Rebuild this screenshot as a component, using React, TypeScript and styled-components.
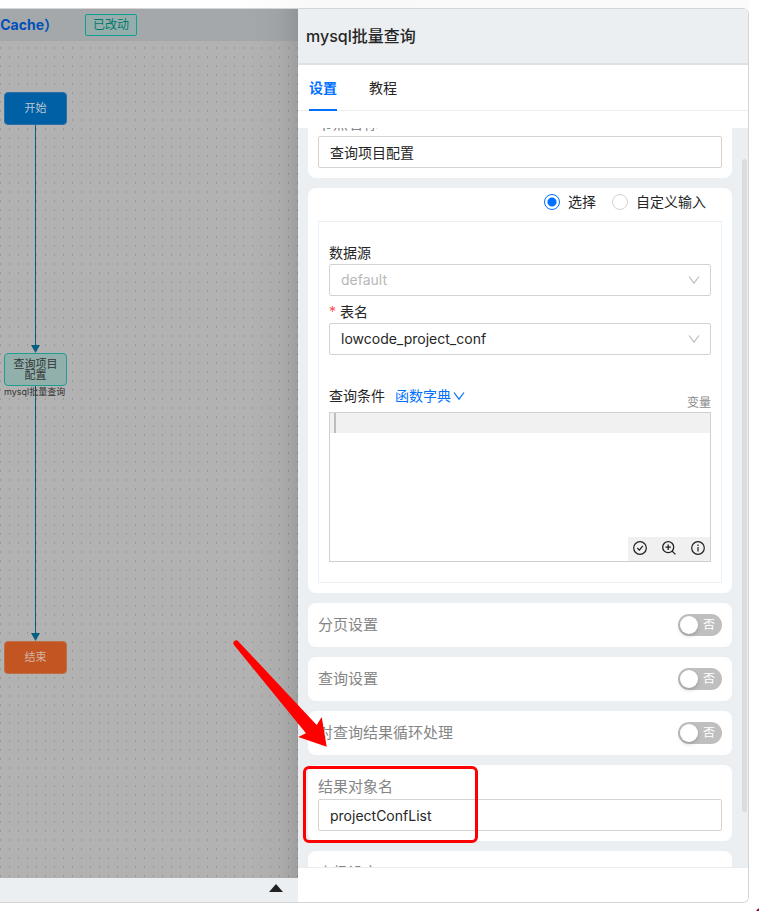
import React, { useLayoutEffect, useRef, useState } from "react";
import styled, { createGlobalStyle, css } from "styled-components";

const GlobalStyle = createGlobalStyle`
  *, *::before, *::after { box-sizing: border-box; }
  html, body, #root { height: 100%; }
  body {
    margin: 0;
    background: #fff;
    color: #262626;
    font-family: Inter, "Noto Sans CJK SC", sans-serif;
    font-size: 14px;
    line-height: 22px;
  }
  button, input, select, textarea { font: inherit; color: inherit; }
`;

const Page = styled.div`
  position: relative;
  height: 100vh;
  min-height: 600px;
  padding: 8px 10px 8px 0;
  overflow: hidden;
  background: linear-gradient(to right, #fff 230px, #f9f9f9 310px, #fbfbfb 749px, #fff 750px) top / 100% 8px no-repeat;
`;

const AppWindow = styled.div`
  display: flex;
  height: 100%;
  border: solid #d5d5d5;
  border-width: 1px 1px 1px 0;
  border-radius: 0 6px 6px 0;
  overflow: hidden;
`;

const Workspace = styled.main`
  flex: 1;
  min-width: 0;
  display: flex;
  flex-direction: column;
`;

const Masked = styled.div`
  position: relative;
  flex: 1;
  min-height: 0;
  display: flex;
  flex-direction: column;
  &::after {
    content: "";
    position: absolute;
    inset: 0 0 0 auto;
    width: 48px;
    pointer-events: none;
    background: linear-gradient(to right, rgba(0, 0, 0, 0), rgba(0, 0, 0, 0.03) 60%, rgba(0, 0, 0, 0.11));
  }
`;

const Toolbar = styled.header`
  display: flex;
  align-items: center;
  gap: 27px;
  height: 32px;
  background: #a4a8ab;
`;

const FlowTitle = styled.h1`
  display: flex;
  justify-content: flex-end;
  width: 58px;
  margin: 0;
  overflow: hidden;
  white-space: nowrap;
  font-size: 14px;
  font-weight: 700;
  color: #0050b8;
`;

const Tag = styled.span`
  height: 22px;
  padding: 0 7px;
  border: 1px solid #13a094;
  border-radius: 2px;
  background: #95aeab;
  color: #007a70;
  font-size: 12px;
  line-height: 20px;
`;

const Canvas = styled.div`
  position: relative;
  flex: 1;
  overflow: hidden;
  background-color: #b2b2b2;
  background-image: conic-gradient(from 0deg at 1px 2px, transparent 270deg, #999 270deg);
  background-size: 9px 9px;
  background-position: 0 6px;
`;

const Edges = styled.svg`
  position: absolute;
  inset: 0;
  width: 100%;
  height: 100%;
`;

const nodeTones = {
  start: css`background: #0060a6; border-color: #2a70a8; color: #b9c7d3;`,
  step: css`background: #91b0ac; border-color: #1f9f93; color: #333;`,
  end: css`background: #c25521; border-color: #bd7048; color: #d2b3a5;`,
};

const FlowNode = styled.div<{ $top: number; $tone: keyof typeof nodeTones }>`
  position: absolute;
  left: 4px;
  top: ${(p) => p.$top}px;
  width: 63px;
  height: 33px;
  padding: 0 8px;
  display: flex;
  align-items: center;
  justify-content: center;
  text-align: center;
  border: 1px solid;
  border-radius: 4px;
  font-size: 11px;
  line-height: 11px;
  ${(p) => nodeTones[p.$tone]}
`;

const NodeCaption = styled.span`
  position: absolute;
  left: 4px;
  top: 345px;
  font-size: 9px;
  line-height: 12px;
  color: #333;
  white-space: nowrap;
`;

const StatusBar = styled.footer`
  display: flex;
  align-items: flex-start;
  justify-content: flex-end;
  height: 24px;
  padding: 4px 14px 0 0;
  background: #ebeff2;
`;

const ExpandButton = styled.button`
  display: flex;
  width: 16px;
  height: 12px;
  padding: 0;
  border: 0;
  background: none;
  align-items: center;
  justify-content: center;
`;

const Drawer = styled.aside`
  display: flex;
  flex-direction: column;
  flex: 0 0 450px;
  min-width: 0;
  background: #fff;
`;

const DrawerHeader = styled.header`
  padding: 16px 8px;
  border-bottom: 2px solid #dde1e4;
  background: #ebeff2;
`;

const DrawerTitle = styled.h2`
  margin: 0;
  font-size: 16px;
  line-height: 22px;
  font-weight: 500;
`;

const TabList = styled.nav`
  display: flex;
  gap: 32px;
  height: 46px;
  padding: 0 11px;
  margin-bottom: 17px;
  border-bottom: 1px solid #eeeeee;
`;

const TabButton = styled.button<{ $active: boolean }>`
  height: 46px;
  padding: 2px 0 0;
  border: 0;
  border-bottom: 2px solid ${(p) => (p.$active ? "#0070ff" : "transparent")};
  background: none;
  color: ${(p) => (p.$active ? "#0070ff" : "#262626")};
  font-weight: ${(p) => (p.$active ? 600 : 400)};
`;

const ScrollFrame = styled.div`
  position: relative;
  flex: 1;
  min-height: 0;
  background: #ebeff2;
`;

const ScrollArea = styled.div`
  height: 100%;
  overflow-y: auto;
  scrollbar-width: none;
  padding: 10px 16px 10px 10px;
  display: flex;
  flex-direction: column;
  gap: 10px;
`;

const ScrollThumb = styled.div`
  position: absolute;
  top: 31px;
  bottom: 55px;
  right: 1px;
  width: 5px;
  border-radius: 3px;
  background: #dcdcdc;
`;

const Card = styled.section<{ $tight?: boolean }>`
  flex: none;
  padding: ${(p) => (p.$tight ? "3px 10px 10px" : "10px")};
  border-radius: 8px;
  background: #fff;
`;

const SwitchCard = styled(Card)`
  display: flex;
  align-items: center;
  justify-content: space-between;
`;

const SectionLabel = styled.label`
  display: block;
  font-size: 15px;
  line-height: 24px;
  color: #858585;
`;

const control = css`
  display: block;
  width: 100%;
  height: 32px;
  padding: 0 11px;
  border: 1px solid #d3d3d3;
  border-radius: 2px;
  background: #fff;
  outline: none;
`;

const TextInput = styled.input`
  ${control}
`;

const RadioRow = styled.div`
  display: flex;
  justify-content: flex-end;
  gap: 16px;
  padding-right: 16px;
  margin-bottom: 8px;
`;

const RadioLabel = styled.label`
  display: flex;
  align-items: center;
  gap: 8px;
`;

const Radio = styled.input`
  appearance: none;
  width: 16px;
  height: 16px;
  margin: 0;
  border: 1px solid #d3d3d3;
  border-radius: 50%;
  background: #fff;
  &:checked {
    border-color: #0070ff;
    background: radial-gradient(circle, #0070ff 4px, #fff 5px);
  }
`;

const QueryBox = styled.div`
  padding: 20px 10px;
  border: 1px solid #ebeff4;
`;

const FieldGroup = styled.div<{ $gap: number }>`
  margin-bottom: ${(p) => p.$gap}px;
`;

const FieldLabel = styled.label`
  display: block;
`;

const Required = styled.span`
  margin-right: 4px;
  color: #ff4d4f;
`;

const SelectWrap = styled.div`
  position: relative;
  & > svg {
    position: absolute;
    right: 11px;
    top: 10px;
    pointer-events: none;
  }
`;

const Select = styled.select`
  ${control}
  appearance: none;
  opacity: 1;
  &:disabled { color: #b8b8b8; }
`;

const ConditionHeader = styled.div`
  display: flex;
  align-items: flex-start;
  gap: 10px;
  height: 27px;
`;

const DictionaryLink = styled.a`
  display: flex;
  align-items: center;
  gap: 2px;
  color: #0070ff;
  text-decoration: none;
`;

const VariableLink = styled.a`
  align-self: flex-end;
  margin-left: auto;
  font-size: 12px;
  line-height: 18px;
  color: #8c8c8c;
  text-decoration: none;
`;

const Editor = styled.div`
  position: relative;
  height: 150px;
  border: 1px solid #cfcfcf;
`;

const Code = styled.textarea`
  display: block;
  width: 100%;
  height: 100%;
  padding: 0 4px;
  border: 0;
  outline: none;
  resize: none;
  line-height: 20px;
  background:
    linear-gradient(#bdbdbd, #bdbdbd) 4px 0 / 2px 20px no-repeat,
    linear-gradient(#f1f1f1, #f1f1f1) 0 0 / 100% 20px no-repeat #fff;
`;

const EditorTools = styled.div`
  position: absolute;
  right: 0;
  bottom: 0;
  display: flex;
  gap: 5px;
  background: #f0f0f0;
`;

const ToolButton = styled.button`
  display: flex;
  align-items: center;
  justify-content: center;
  width: 24px;
  height: 24px;
  padding: 0 0 2px;
  border: 0;
  background: none;
  color: #1f1f1f;
`;

const SwitchTrack = styled.button`
  display: flex;
  align-items: center;
  gap: 5px;
  width: 44px;
  height: 22px;
  padding: 2px;
  border: 0;
  border-radius: 11px;
  background: #bfbfbf;
  color: #fff;
  font-size: 12px;
  line-height: 18px;
  &[aria-checked="true"] {
    flex-direction: row-reverse;
    background: #0070ff;
  }
`;

const SwitchKnob = styled.span`
  flex: none;
  width: 18px;
  height: 18px;
  border-radius: 50%;
  background: #fff;
  box-shadow: 0 2px 4px rgba(0, 35, 11, 0.2);
`;

const DrawerFooter = styled.footer`
  height: 35px;
  border-top: 1px solid #ebebeb;
`;

const Pointer = styled.svg`
  position: absolute;
  left: 230px;
  top: 636px;
  pointer-events: none;
`;

const Highlight = styled.div`
  position: absolute;
  left: 303px;
  top: 766px;
  width: 175px;
  height: 77px;
  border: 3px solid #fe0000;
  border-radius: 6px;
  pointer-events: none;
`;

const CornerMark = styled.div`
  position: absolute;
  right: -6px;
  bottom: -6px;
  width: 9px;
  height: 9px;
  border-radius: 50%;
  background: #8b1520;
`;

const Chevron = ({ color }: { color: string }) => (
  <svg width="12" height="12" viewBox="0 0 12 12" fill="none" stroke={color} strokeWidth="1.2">
    <path d="M1 2.5 6 9.2 11 2.5" />
  </svg>
);

const CheckIcon = () => (
  <svg width="14" height="14" viewBox="0 0 14 14" fill="none" stroke="currentColor" strokeWidth="1.2">
    <circle cx="7" cy="7" r="6.3" />
    <path d="M4.3 7 6.4 9.2 9.8 4.8" />
  </svg>
);

const ZoomInIcon = () => (
  <svg width="14" height="14" viewBox="0 0 14 14" fill="none" stroke="currentColor" strokeWidth="1.3">
    <circle cx="6.2" cy="6.2" r="5.5" />
    <path d="M10.1 10.1 13.4 13.4M3.5 6.2h5.4M6.2 3.5v5.4" />
  </svg>
);

const InfoIcon = () => (
  <svg width="14" height="14" viewBox="0 0 14 14" fill="none" stroke="currentColor" strokeWidth="1.2">
    <circle cx="7" cy="7" r="6.3" />
    <path d="M7 6.1v4.4M7 3.5v1.4" />
  </svg>
);

function ToggleSection({ id, label }: { id: string; label: string }) {
  const [on, setOn] = useState(false);
  return (
    <SwitchCard>
      <SectionLabel htmlFor={id}>{label}</SectionLabel>
      <SwitchTrack id={id} type="button" role="switch" aria-checked={on} onClick={() => setOn(!on)}>
        <SwitchKnob />
        {on ? "是" : "否"}
      </SwitchTrack>
    </SwitchCard>
  );
}

function FlowCanvas() {
  return (
    <Canvas>
      <Edges stroke="#056080" fill="#056080">
        <path d="M35.5 84V305M35.5 345V593" fill="none" />
        <path d="M31 304h9l-4.500 8zM31 592h9l-4.500 8z" stroke="none" />
      </Edges>
      <FlowNode $top={51} $tone="start">开始</FlowNode>
      <FlowNode $top={312} $tone="step">查询项目配置</FlowNode>
      <NodeCaption>mysql批量查询</NodeCaption>
      <FlowNode $top={600} $tone="end">结束</FlowNode>
    </Canvas>
  );
}

function QuerySettings() {
  const [mode, setMode] = useState("select");
  return (
    <Card $tight>
      <RadioRow>
        <RadioLabel>
          <Radio type="radio" name="mode" checked={mode === "select"} onChange={() => setMode("select")} />
          选择
        </RadioLabel>
        <RadioLabel>
          <Radio type="radio" name="mode" checked={mode === "custom"} onChange={() => setMode("custom")} />
          自定义输入
        </RadioLabel>
      </RadioRow>
      <QueryBox>
        <FieldGroup $gap={5}>
          <FieldLabel htmlFor="source">数据源</FieldLabel>
          <SelectWrap>
            <Select id="source" disabled>
              <option>default</option>
            </Select>
            <Chevron color="#bfbfbf" />
          </SelectWrap>
        </FieldGroup>
        <FieldGroup $gap={30}>
          <FieldLabel htmlFor="table">
            <Required>*</Required>表名
          </FieldLabel>
          <SelectWrap>
            <Select id="table">
              <option>lowcode_project_conf</option>
            </Select>
            <Chevron color="#bfbfbf" />
          </SelectWrap>
        </FieldGroup>
        <ConditionHeader>
          <FieldLabel htmlFor="condition">查询条件</FieldLabel>
          <DictionaryLink href="#dictionary">
            函数字典
            <Chevron color="#0070ff" />
          </DictionaryLink>
          <VariableLink href="#variables">变量</VariableLink>
        </ConditionHeader>
        <Editor>
          <Code id="condition" spellCheck={false} />
          <EditorTools>
            <ToolButton type="button" aria-label="检查"><CheckIcon /></ToolButton>
            <ToolButton type="button" aria-label="放大"><ZoomInIcon /></ToolButton>
            <ToolButton type="button" aria-label="说明"><InfoIcon /></ToolButton>
          </EditorTools>
        </Editor>
      </QueryBox>
    </Card>
  );
}

export default function App() {
  const [tab, setTab] = useState("设置");
  const scroller = useRef<HTMLDivElement>(null);

  useLayoutEffect(() => {
    if (scroller.current) scroller.current.scrollTop = 36;
  }, []);

  return (
    <>
      <GlobalStyle />
      <Page>
        <AppWindow>
          <Workspace>
            <Masked>
              <Toolbar>
                <FlowTitle>sCache）</FlowTitle>
                <Tag>已改动</Tag>
              </Toolbar>
              <FlowCanvas />
            </Masked>
            <StatusBar>
              <ExpandButton type="button" aria-label="展开">
                <svg width="14" height="8" viewBox="0 0 14 8" fill="#222">
                  <path d="M7 0 14 8H0z" />
                </svg>
              </ExpandButton>
            </StatusBar>
          </Workspace>
          <Drawer>
            <DrawerHeader>
              <DrawerTitle>mysql批量查询</DrawerTitle>
            </DrawerHeader>
            <TabList>
              {["设置", "教程"].map((name) => (
                <TabButton key={name} type="button" $active={tab === name} onClick={() => setTab(name)}>
                  {name}
                </TabButton>
              ))}
            </TabList>
            <ScrollFrame>
              <ScrollArea ref={scroller}>
                <Card>
                  <SectionLabel htmlFor="node-name">节点名称</SectionLabel>
                  <TextInput id="node-name" defaultValue="查询项目配置" />
                </Card>
                <QuerySettings />
                <ToggleSection id="paging" label="分页设置" />
                <ToggleSection id="query" label="查询设置" />
                <ToggleSection id="loop" label="对查询结果循环处理" />
                <Card>
                  <SectionLabel htmlFor="result-name">结果对象名</SectionLabel>
                  <TextInput id="result-name" defaultValue="projectConfList" />
                </Card>
                <Card>
                  <SectionLabel htmlFor="advanced">高级设定</SectionLabel>
                  <TextInput id="advanced" />
                </Card>
              </ScrollArea>
              <ScrollThumb />
            </ScrollFrame>
            <DrawerFooter />
          </Drawer>
        </AppWindow>
        <Pointer width="100" height="114" viewBox="230 636 100 114" fill="#fe0000">
          <path d="M238.200 641.200 316.700 725 321.700 717 326.700 746.700 298.300 737 306 733.300 234 645Q232.500 642.500 234.300 640.900 236.300 639.500 238.200 641.200z" />
        </Pointer>
        <Highlight />
        <CornerMark />
      </Page>
    </>
  );
}
